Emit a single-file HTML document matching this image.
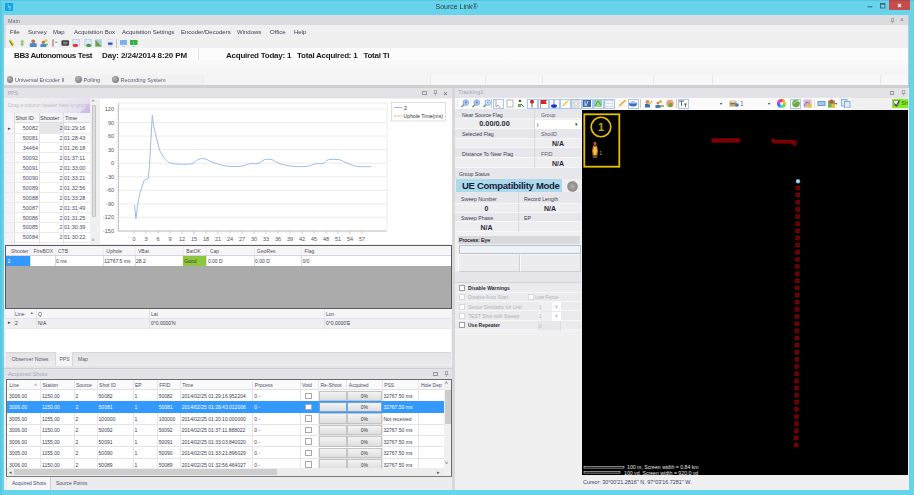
<!DOCTYPE html><html><head><meta charset="utf-8"><style>*{box-sizing:border-box}
body{margin:0;width:914px;height:495px;overflow:hidden;position:relative;background:#66d5ec;font-family:"Liberation Sans",sans-serif;color:#333}
.a{position:absolute}
.t{position:absolute;white-space:nowrap}
</style></head><body><div style="position:absolute;left:0;top:0;width:914px;height:495px;filter:blur(0.35px)"><div class="a" style="left:0px;top:0px;width:914px;height:1px;background:#5cc3dc"></div><div class="a" style="left:4.5px;top:3px;width:8px;height:8px;background:#12a2ea"></div><svg class="a" style="left:4.5px;top:3px" width="8" height="8"><path d="M3 1.5L3.8 4.5L5.5 3.5L4.8 7" stroke="#9ad8ff" stroke-width="1" fill="none"/></svg><div class="a" style="left:0px;top:0px;width:1.5px;height:495px;background:#5ec6df"></div><div class="t" style="left:435.5px;top:3.30px;font-size:7px;line-height:8.40px;color:#2a3a44">Source Link&reg;</div><svg class="a" style="left:860px;top:0" width="54" height="15"><line x1="867.5" y1="6.8" x2="872.5" y2="6.8" transform="translate(-860,0)" stroke="#3a5a66" stroke-width="1"/><rect x="20.5" y="3.5" width="4.5" height="4.5" fill="none" stroke="#3a5a66" stroke-width="0.8"/><line x1="20.5" y1="4" x2="25" y2="4" stroke="#3a5a66" stroke-width="1.2"/></svg><div class="a" style="left:889px;top:0px;width:21px;height:10px;background:#c94a4c"></div><div class="a" style="left:889px;top:0px;width:21px;height:1px;background:#a84a50"></div><svg class="a" style="left:889px;top:0" width="21" height="10"><path d="M9 4L12 7M12 4L9 7" stroke="#fff" stroke-width="1.1"/></svg><div class="a" style="left:4px;top:15px;width:905px;height:475px;background:#f0f0f0"></div><div class="a" style="left:4px;top:15px;width:1.5px;height:475px;background:#dcdcdc"></div><div class="a" style="left:908px;top:15px;width:1px;height:475px;background:#c8c8c8"></div><div class="a" style="left:4px;top:15px;width:904px;height:10px;background:#dcdce0"></div><div class="t" style="left:8px;top:17.90px;font-size:5.5px;line-height:6.60px;color:#6a6a78">Main</div><svg class="a" style="left:890px;top:18px" width="5" height="6"><path d="M1 0.5h3M1.5 0.5v3h2v-3M0.5 3.5h4M2.5 3.5v2" stroke="#999" stroke-width="0.7" fill="none"/></svg><div class="t" style="left:900px;top:16.40px;font-size:6.5px;line-height:7.80px;color:#777">&#215;</div><div class="t" style="left:10px;top:28.90px;font-size:6px;line-height:7.20px;color:#3a3a55">File</div><div class="t" style="left:28px;top:28.90px;font-size:6px;line-height:7.20px;color:#3a3a55">Survey</div><div class="t" style="left:53px;top:28.90px;font-size:6px;line-height:7.20px;color:#3a3a55">Map</div><div class="t" style="left:74px;top:28.90px;font-size:6px;line-height:7.20px;color:#3a3a55">Acquisition Box</div><div class="t" style="left:122px;top:28.90px;font-size:6px;line-height:7.20px;color:#3a3a55">Acquisition Settings</div><div class="t" style="left:181px;top:28.90px;font-size:6px;line-height:7.20px;color:#3a3a55">Encoder/Decoders</div><div class="t" style="left:237px;top:28.90px;font-size:6px;line-height:7.20px;color:#3a3a55">Windows</div><div class="t" style="left:270px;top:28.90px;font-size:6px;line-height:7.20px;color:#3a3a55">Office</div><div class="t" style="left:294px;top:28.90px;font-size:6px;line-height:7.20px;color:#3a3a55">Help</div><svg class="a" style="left:7.5px;top:39px" width="6.5" height="8" viewBox="0 0 10 10" preserveAspectRatio="none"><path d="M1 2l3-1.5 5 6-2.5 3.5z" fill="#c8c020"/><path d="M3 3l4 5" stroke="#707010" stroke-width="1.2"/></svg><svg class="a" style="left:18.5px;top:39px" width="6.5" height="8" viewBox="0 0 10 10" preserveAspectRatio="none"><path d="M5 0.5L8.5 4H6.5V6H8.5L5 9.5 1.5 6H3.5V4H1.5z" fill="#90d070"/></svg><svg class="a" style="left:28.5px;top:39px" width="8.5" height="8" viewBox="0 0 10 10" preserveAspectRatio="none"><circle cx="5" cy="2.8" r="2.3" fill="#c07040"/><path d="M1 10V6.5Q1 5 3 5H7Q9 5 9 6.5V10z" fill="#4a88d0"/></svg><svg class="a" style="left:39.5px;top:39px" width="8.5" height="8" viewBox="0 0 10 10" preserveAspectRatio="none"><circle cx="7" cy="2" r="1.8" fill="#e8c050"/><circle cx="4" cy="4" r="1.8" fill="#b87040"/><path d="M0.5 10V7.5Q0.5 6 2 6H6Q7.5 6 7.5 7.5V10z" fill="#4a88d0"/><path d="M6 8l3-2" stroke="#50b030" stroke-width="1.6"/></svg><svg class="a" style="left:51.5px;top:39px" width="7" height="8" viewBox="0 0 10 10" preserveAspectRatio="none"><rect x="2" y="0.5" width="7.5" height="9" fill="#f8f8fa" stroke="#d8dce4" stroke-width="0.5"/><rect x="0.5" y="0.5" width="1.8" height="9" fill="#c07848"/><path d="M4.5 4h3" stroke="#5a90e0" stroke-width="1.5"/></svg><svg class="a" style="left:61px;top:39px" width="8.5" height="8" viewBox="0 0 10 10" preserveAspectRatio="none"><rect x="0.5" y="1.5" width="9" height="7" rx="1.5" fill="#404040"/><rect x="2.5" y="3.5" width="5" height="3" fill="#888"/></svg><svg class="a" style="left:72px;top:39px" width="8.5" height="8" viewBox="0 0 10 10" preserveAspectRatio="none"><rect x="1" y="0.5" width="7.5" height="8" fill="#dce8f8" stroke="#a8c0e0" stroke-width="0.7"/><ellipse cx="4" cy="8" rx="3.2" ry="2" fill="#e83030"/></svg><svg class="a" style="left:83.5px;top:39px" width="8.5" height="8" viewBox="0 0 10 10" preserveAspectRatio="none"><rect x="1" y="0.5" width="7.5" height="8" fill="#dce8f8" stroke="#a8c0e0" stroke-width="0.7"/><ellipse cx="5.5" cy="8" rx="3.2" ry="2" fill="#40a040"/></svg><svg class="a" style="left:94.8px;top:39px" width="7.2" height="8" viewBox="0 0 10 10" preserveAspectRatio="none"><rect x="0.5" y="0.5" width="9" height="9" fill="#a8d0e8"/><path d="M0.5 0.5L9.5 9.5H0.5z" fill="#70a040"/></svg><svg class="a" style="left:106.5px;top:39px" width="6.5" height="8" viewBox="0 0 10 10" preserveAspectRatio="none"><rect x="1.5" y="0.5" width="7" height="9" fill="#f0f0f0" stroke="#d0d0d0" stroke-width="0.5"/><ellipse cx="5" cy="6" rx="4" ry="1.8" fill="#3a68d0"/></svg><div class="a" style="left:116.3px;top:38.5px;width:1px;height:9px;background:#c4c4c4"></div><svg class="a" style="left:119.5px;top:39.5px" width="7.5" height="7" viewBox="0 0 10 10" preserveAspectRatio="none"><rect x="0" y="0" width="10" height="7" fill="#7ab0f4"/><rect x="3" y="8.5" width="4" height="1.5" fill="#c8d0d8"/></svg><svg class="a" style="left:130.3px;top:39.5px" width="7.5" height="7" viewBox="0 0 10 10" preserveAspectRatio="none"><rect x="0" y="0" width="10" height="7" fill="#30b040"/><rect x="3" y="8.5" width="4" height="1.5" fill="#c8d0d8"/><path d="M5 2v3" stroke="#bfe8c0" stroke-width="0.8"/></svg><div class="a" style="left:4px;top:48px;width:904px;height:12px;background:#fcfcfc"></div><div class="t" style="left:14px;top:50.90px;font-size:8px;line-height:9.60px;font-weight:bold;color:#1a1a1a;letter-spacing:-0.38px">BB3 Autonomous Test</div><div class="t" style="left:102px;top:50.90px;font-size:8px;line-height:9.60px;font-weight:bold;color:#1a1a1a;letter-spacing:-0.12px">Day: 2/24/2014 8:20 PM</div><div class="a" style="left:197.5px;top:49px;width:1px;height:11px;background:#e0e0e0"></div><div class="t" style="left:226px;top:50.90px;font-size:8px;line-height:9.60px;font-weight:bold;color:#1a1a1a;letter-spacing:-0.24px">Acquired Today: 1&nbsp;&nbsp; Total Acquired: 1&nbsp;&nbsp; Total Ti</div><div class="a" style="left:4px;top:60px;width:904px;height:14.5px;background:linear-gradient(#fafafa,#f4f4f4)"></div><div class="a" style="left:4px;top:74.5px;width:904px;height:10.5px;background:#f8f8f8"></div><div class="a" style="left:4px;top:74.5px;width:199px;height:10.5px;background:#f1f1f1"></div><div class="a" style="left:203px;top:74.5px;width:227px;height:10.5px;background:#f4f4f4"></div><div class="a" style="left:203px;top:75px;width:1px;height:10px;background:#ebebeb"></div><div class="a" style="left:430px;top:75px;width:1px;height:10px;background:#ebebeb"></div><div class="a" style="left:485px;top:75px;width:1px;height:10px;background:#ebebeb"></div><div class="a" style="left:542px;top:75px;width:1px;height:10px;background:#ebebeb"></div><div class="a" style="left:653px;top:75px;width:1px;height:10px;background:#ebebeb"></div><div class="a" style="left:712px;top:75px;width:1px;height:10px;background:#ebebeb"></div><div class="a" style="left:880px;top:75px;width:1px;height:10px;background:#ebebeb"></div><div class="a" style="left:6.6px;top:75.8px;width:6.8px;height:6.8px;border-radius:50%;background:radial-gradient(circle at 40% 35%,#b8b8b8,#6a6a6a)"></div><div class="t" style="left:15px;top:76.70px;font-size:5.5px;line-height:6.60px;color:#5a5a78">Universal Encoder II</div><div class="a" style="left:75.1px;top:75.8px;width:6.8px;height:6.8px;border-radius:50%;background:radial-gradient(circle at 40% 35%,#b8b8b8,#6a6a6a)"></div><div class="t" style="left:83.5px;top:76.70px;font-size:5.5px;line-height:6.60px;color:#5a5a78">Polling</div><div class="a" style="left:112.19999999999999px;top:75.8px;width:6.8px;height:6.8px;border-radius:50%;background:radial-gradient(circle at 40% 35%,#b8b8b8,#6a6a6a)"></div><div class="t" style="left:120.6px;top:76.70px;font-size:5.5px;line-height:6.60px;color:#5a5a78">Recording System</div><div class="a" style="left:4px;top:85px;width:904px;height:3px;background:#cfcfd2"></div><div class="a" style="left:4px;top:88px;width:448px;height:10px;background:#e3e3e7"></div><div class="t" style="left:8px;top:90.00px;font-size:5px;line-height:6.00px;color:#9aa0b8">PPS</div><div class="a" style="left:422px;top:91px;width:4.5px;height:4px;border:0.7px solid #999;border-top-width:1.3px"></div><svg class="a" style="left:433px;top:90px" width="5" height="6"><path d="M1 0.5h3M1.5 0.5v3h2v-3M0.5 3.5h4M2.5 3.5v2" stroke="#999" stroke-width="0.7" fill="none"/></svg><div class="t" style="left:443.2px;top:88.50px;font-size:7.5px;line-height:9.00px;color:#666">&#215;</div><div class="a" style="left:4px;top:98px;width:448px;height:148px;background:#f0f0f0"></div><div class="a" style="left:6px;top:97.5px;width:84px;height:15px;background:linear-gradient(135deg,#f1f1f3 0%,#eeebf2 55%,#e6dcf0 89.5%,#d4c4f0 90%,#c8b4ec 100%)"></div><div class="t" style="left:8px;top:102.00px;font-size:5px;line-height:6.00px;color:#c0c0c8">Drag a column header here to group</div><div class="a" style="left:6px;top:112.5px;width:84px;height:132px;background:#fff"></div><div class="a" style="left:6px;top:112.5px;width:84px;height:10.5px;background:#f4f4f6;border-bottom:1px solid #dcdcdc"></div><div class="a" style="left:6px;top:112.5px;width:7.5px;height:132px;background:#f4f4f6"></div><div class="a" style="left:13.5px;top:112.5px;width:1px;height:132px;background:#dedede"></div><div class="a" style="left:38.5px;top:112.5px;width:1px;height:132px;background:#dedede"></div><div class="a" style="left:63px;top:112.5px;width:1px;height:132px;background:#dedede"></div><div class="t" style="left:15.5px;top:114.50px;font-size:5.5px;line-height:6.60px;color:#404050">Shot ID</div><div class="t" style="left:40px;top:114.50px;font-size:5.5px;line-height:6.60px;color:#404050">Shooter</div><div class="t" style="left:65px;top:114.50px;font-size:5.5px;line-height:6.60px;color:#404050">Time</div><div class="a" style="left:39px;top:123.1px;width:24px;height:9.94px;background:#e6e6e8"></div><div class="t" style="left:8px;top:125.07px;font-size:5px;line-height:6.00px;color:#333">&#9656;</div><div class="a" style="left:6px;top:132.54px;width:84px;height:1px;background:#ebebeb"></div><div class="t" style="left:14px;top:125.07px;font-size:5.5px;line-height:6.60px;width:24px;text-align:right;color:#4a4a68">50082</div><div class="t" style="left:39px;top:125.07px;font-size:5.5px;line-height:6.60px;width:23.5px;text-align:right;color:#4a4a68">2</div><div class="t" style="left:64px;top:125.07px;font-size:5.5px;line-height:6.60px;color:#4a4a68">01:29:16</div><div class="a" style="left:6px;top:142.48px;width:84px;height:1px;background:#ebebeb"></div><div class="t" style="left:14px;top:135.01px;font-size:5.5px;line-height:6.60px;width:24px;text-align:right;color:#4a4a68">50081</div><div class="t" style="left:39px;top:135.01px;font-size:5.5px;line-height:6.60px;width:23.5px;text-align:right;color:#4a4a68">2</div><div class="t" style="left:64px;top:135.01px;font-size:5.5px;line-height:6.60px;color:#4a4a68">01:28:43</div><div class="a" style="left:6px;top:152.42px;width:84px;height:1px;background:#ebebeb"></div><div class="t" style="left:14px;top:144.95px;font-size:5.5px;line-height:6.60px;width:24px;text-align:right;color:#4a4a68">34464</div><div class="t" style="left:39px;top:144.95px;font-size:5.5px;line-height:6.60px;width:23.5px;text-align:right;color:#4a4a68">2</div><div class="t" style="left:64px;top:144.95px;font-size:5.5px;line-height:6.60px;color:#4a4a68">01:26:18</div><div class="a" style="left:6px;top:162.35999999999999px;width:84px;height:1px;background:#ebebeb"></div><div class="t" style="left:14px;top:154.89px;font-size:5.5px;line-height:6.60px;width:24px;text-align:right;color:#4a4a68">50092</div><div class="t" style="left:39px;top:154.89px;font-size:5.5px;line-height:6.60px;width:23.5px;text-align:right;color:#4a4a68">2</div><div class="t" style="left:64px;top:154.89px;font-size:5.5px;line-height:6.60px;color:#4a4a68">01:37:11</div><div class="a" style="left:6px;top:172.29999999999998px;width:84px;height:1px;background:#ebebeb"></div><div class="t" style="left:14px;top:164.83px;font-size:5.5px;line-height:6.60px;width:24px;text-align:right;color:#4a4a68">50091</div><div class="t" style="left:39px;top:164.83px;font-size:5.5px;line-height:6.60px;width:23.5px;text-align:right;color:#4a4a68">2</div><div class="t" style="left:64px;top:164.83px;font-size:5.5px;line-height:6.60px;color:#4a4a68">01:33:00</div><div class="a" style="left:6px;top:182.23999999999998px;width:84px;height:1px;background:#ebebeb"></div><div class="t" style="left:14px;top:174.77px;font-size:5.5px;line-height:6.60px;width:24px;text-align:right;color:#4a4a68">50090</div><div class="t" style="left:39px;top:174.77px;font-size:5.5px;line-height:6.60px;width:23.5px;text-align:right;color:#4a4a68">2</div><div class="t" style="left:64px;top:174.77px;font-size:5.5px;line-height:6.60px;color:#4a4a68">01:33:21</div><div class="a" style="left:6px;top:192.18px;width:84px;height:1px;background:#ebebeb"></div><div class="t" style="left:14px;top:184.71px;font-size:5.5px;line-height:6.60px;width:24px;text-align:right;color:#4a4a68">50089</div><div class="t" style="left:39px;top:184.71px;font-size:5.5px;line-height:6.60px;width:23.5px;text-align:right;color:#4a4a68">2</div><div class="t" style="left:64px;top:184.71px;font-size:5.5px;line-height:6.60px;color:#4a4a68">01:32:56</div><div class="a" style="left:6px;top:202.12px;width:84px;height:1px;background:#ebebeb"></div><div class="t" style="left:14px;top:194.65px;font-size:5.5px;line-height:6.60px;width:24px;text-align:right;color:#4a4a68">50088</div><div class="t" style="left:39px;top:194.65px;font-size:5.5px;line-height:6.60px;width:23.5px;text-align:right;color:#4a4a68">2</div><div class="t" style="left:64px;top:194.65px;font-size:5.5px;line-height:6.60px;color:#4a4a68">01:33:28</div><div class="a" style="left:6px;top:212.06px;width:84px;height:1px;background:#ebebeb"></div><div class="t" style="left:14px;top:204.59px;font-size:5.5px;line-height:6.60px;width:24px;text-align:right;color:#4a4a68">50087</div><div class="t" style="left:39px;top:204.59px;font-size:5.5px;line-height:6.60px;width:23.5px;text-align:right;color:#4a4a68">2</div><div class="t" style="left:64px;top:204.59px;font-size:5.5px;line-height:6.60px;color:#4a4a68">01:31:49</div><div class="a" style="left:6px;top:222.0px;width:84px;height:1px;background:#ebebeb"></div><div class="t" style="left:14px;top:214.53px;font-size:5.5px;line-height:6.60px;width:24px;text-align:right;color:#4a4a68">50086</div><div class="t" style="left:39px;top:214.53px;font-size:5.5px;line-height:6.60px;width:23.5px;text-align:right;color:#4a4a68">2</div><div class="t" style="left:64px;top:214.53px;font-size:5.5px;line-height:6.60px;color:#4a4a68">01:31:25</div><div class="a" style="left:6px;top:231.94px;width:84px;height:1px;background:#ebebeb"></div><div class="t" style="left:14px;top:224.47px;font-size:5.5px;line-height:6.60px;width:24px;text-align:right;color:#4a4a68">50085</div><div class="t" style="left:39px;top:224.47px;font-size:5.5px;line-height:6.60px;width:23.5px;text-align:right;color:#4a4a68">2</div><div class="t" style="left:64px;top:224.47px;font-size:5.5px;line-height:6.60px;color:#4a4a68">01:30:39</div><div class="a" style="left:6px;top:241.88px;width:84px;height:1px;background:#ebebeb"></div><div class="t" style="left:14px;top:234.41px;font-size:5.5px;line-height:6.60px;width:24px;text-align:right;color:#4a4a68">50084</div><div class="t" style="left:39px;top:234.41px;font-size:5.5px;line-height:6.60px;width:23.5px;text-align:right;color:#4a4a68">2</div><div class="t" style="left:64px;top:234.41px;font-size:5.5px;line-height:6.60px;color:#4a4a68">01:30:22</div><div class="a" style="left:90.5px;top:98px;width:7px;height:146px;background:#f0f0f0"></div><div class="t" style="left:91.5px;top:98.00px;font-size:5px;line-height:6.00px;color:#666">&#708;</div><div class="a" style="left:92.3px;top:105px;width:4px;height:112px;background:#dedede;border:0.7px solid #c4c4c4;border-radius:1px"></div><div class="t" style="left:91.5px;top:237.00px;font-size:5px;line-height:6.00px;color:#666">&#709;</div><div class="a" style="left:99.5px;top:99px;width:352px;height:145px;background:#fff"></div><svg class="a" style="left:0;top:0" width="914" height="495"><line x1="118" y1="109.0" x2="386" y2="109.0" stroke="#ececec" stroke-width="1"/><text x="114" y="111.0" font-size="5.5" text-anchor="end" fill="#555" font-family="Liberation Sans">120</text><line x1="118" y1="122.5" x2="386" y2="122.5" stroke="#ececec" stroke-width="1"/><text x="114" y="124.5" font-size="5.5" text-anchor="end" fill="#555" font-family="Liberation Sans">90</text><line x1="118" y1="136.1" x2="386" y2="136.1" stroke="#ececec" stroke-width="1"/><text x="114" y="138.1" font-size="5.5" text-anchor="end" fill="#555" font-family="Liberation Sans">60</text><line x1="118" y1="149.7" x2="386" y2="149.7" stroke="#ececec" stroke-width="1"/><text x="114" y="151.7" font-size="5.5" text-anchor="end" fill="#555" font-family="Liberation Sans">30</text><line x1="118" y1="163.2" x2="386" y2="163.2" stroke="#ececec" stroke-width="1"/><text x="114" y="165.2" font-size="5.5" text-anchor="end" fill="#555" font-family="Liberation Sans">0</text><line x1="118" y1="176.8" x2="386" y2="176.8" stroke="#ececec" stroke-width="1"/><text x="114" y="178.8" font-size="5.5" text-anchor="end" fill="#555" font-family="Liberation Sans">-30</text><line x1="118" y1="190.3" x2="386" y2="190.3" stroke="#ececec" stroke-width="1"/><text x="114" y="192.3" font-size="5.5" text-anchor="end" fill="#555" font-family="Liberation Sans">-60</text><line x1="118" y1="203.9" x2="386" y2="203.9" stroke="#ececec" stroke-width="1"/><text x="114" y="205.9" font-size="5.5" text-anchor="end" fill="#555" font-family="Liberation Sans">-90</text><line x1="118" y1="217.4" x2="386" y2="217.4" stroke="#ececec" stroke-width="1"/><text x="114" y="219.4" font-size="5.5" text-anchor="end" fill="#555" font-family="Liberation Sans">-120</text><line x1="118" y1="230.9" x2="386" y2="230.9" stroke="#ececec" stroke-width="1"/><text x="114" y="232.9" font-size="5.5" text-anchor="end" fill="#555" font-family="Liberation Sans">-150</text><rect x="118.5" y="103" width="268.5" height="128" fill="none" stroke="#e6e6e6" stroke-width="0.8"/><line x1="118.5" y1="103" x2="118.5" y2="231" stroke="#c8c8c8" stroke-width="1"/><line x1="118" y1="231" x2="386" y2="231" stroke="#c8c8c8" stroke-width="1"/><line x1="116.5" y1="109.0" x2="118.5" y2="109.0" stroke="#bbb" stroke-width="0.5"/><line x1="116.5" y1="111.7" x2="118.5" y2="111.7" stroke="#bbb" stroke-width="0.5"/><line x1="116.5" y1="114.4" x2="118.5" y2="114.4" stroke="#bbb" stroke-width="0.5"/><line x1="116.5" y1="117.1" x2="118.5" y2="117.1" stroke="#bbb" stroke-width="0.5"/><line x1="116.5" y1="119.8" x2="118.5" y2="119.8" stroke="#bbb" stroke-width="0.5"/><line x1="116.5" y1="122.5" x2="118.5" y2="122.5" stroke="#bbb" stroke-width="0.5"/><line x1="116.5" y1="125.3" x2="118.5" y2="125.3" stroke="#bbb" stroke-width="0.5"/><line x1="116.5" y1="128.0" x2="118.5" y2="128.0" stroke="#bbb" stroke-width="0.5"/><line x1="116.5" y1="130.7" x2="118.5" y2="130.7" stroke="#bbb" stroke-width="0.5"/><line x1="116.5" y1="133.4" x2="118.5" y2="133.4" stroke="#bbb" stroke-width="0.5"/><line x1="116.5" y1="136.1" x2="118.5" y2="136.1" stroke="#bbb" stroke-width="0.5"/><line x1="116.5" y1="138.8" x2="118.5" y2="138.8" stroke="#bbb" stroke-width="0.5"/><line x1="116.5" y1="141.5" x2="118.5" y2="141.5" stroke="#bbb" stroke-width="0.5"/><line x1="116.5" y1="144.2" x2="118.5" y2="144.2" stroke="#bbb" stroke-width="0.5"/><line x1="116.5" y1="146.9" x2="118.5" y2="146.9" stroke="#bbb" stroke-width="0.5"/><line x1="116.5" y1="149.7" x2="118.5" y2="149.7" stroke="#bbb" stroke-width="0.5"/><line x1="116.5" y1="152.4" x2="118.5" y2="152.4" stroke="#bbb" stroke-width="0.5"/><line x1="116.5" y1="155.1" x2="118.5" y2="155.1" stroke="#bbb" stroke-width="0.5"/><line x1="116.5" y1="157.8" x2="118.5" y2="157.8" stroke="#bbb" stroke-width="0.5"/><line x1="116.5" y1="160.5" x2="118.5" y2="160.5" stroke="#bbb" stroke-width="0.5"/><line x1="116.5" y1="163.2" x2="118.5" y2="163.2" stroke="#bbb" stroke-width="0.5"/><line x1="116.5" y1="165.9" x2="118.5" y2="165.9" stroke="#bbb" stroke-width="0.5"/><line x1="116.5" y1="168.6" x2="118.5" y2="168.6" stroke="#bbb" stroke-width="0.5"/><line x1="116.5" y1="171.3" x2="118.5" y2="171.3" stroke="#bbb" stroke-width="0.5"/><line x1="116.5" y1="174.0" x2="118.5" y2="174.0" stroke="#bbb" stroke-width="0.5"/><line x1="116.5" y1="176.8" x2="118.5" y2="176.8" stroke="#bbb" stroke-width="0.5"/><line x1="116.5" y1="179.5" x2="118.5" y2="179.5" stroke="#bbb" stroke-width="0.5"/><line x1="116.5" y1="182.2" x2="118.5" y2="182.2" stroke="#bbb" stroke-width="0.5"/><line x1="116.5" y1="184.9" x2="118.5" y2="184.9" stroke="#bbb" stroke-width="0.5"/><line x1="116.5" y1="187.6" x2="118.5" y2="187.6" stroke="#bbb" stroke-width="0.5"/><line x1="116.5" y1="190.3" x2="118.5" y2="190.3" stroke="#bbb" stroke-width="0.5"/><line x1="116.5" y1="193.0" x2="118.5" y2="193.0" stroke="#bbb" stroke-width="0.5"/><line x1="116.5" y1="195.7" x2="118.5" y2="195.7" stroke="#bbb" stroke-width="0.5"/><line x1="116.5" y1="198.4" x2="118.5" y2="198.4" stroke="#bbb" stroke-width="0.5"/><line x1="116.5" y1="201.1" x2="118.5" y2="201.1" stroke="#bbb" stroke-width="0.5"/><line x1="116.5" y1="203.8" x2="118.5" y2="203.8" stroke="#bbb" stroke-width="0.5"/><line x1="116.5" y1="206.6" x2="118.5" y2="206.6" stroke="#bbb" stroke-width="0.5"/><line x1="116.5" y1="209.3" x2="118.5" y2="209.3" stroke="#bbb" stroke-width="0.5"/><line x1="116.5" y1="212.0" x2="118.5" y2="212.0" stroke="#bbb" stroke-width="0.5"/><line x1="116.5" y1="214.7" x2="118.5" y2="214.7" stroke="#bbb" stroke-width="0.5"/><line x1="116.5" y1="217.4" x2="118.5" y2="217.4" stroke="#bbb" stroke-width="0.5"/><line x1="116.5" y1="220.1" x2="118.5" y2="220.1" stroke="#bbb" stroke-width="0.5"/><line x1="116.5" y1="222.8" x2="118.5" y2="222.8" stroke="#bbb" stroke-width="0.5"/><line x1="116.5" y1="225.5" x2="118.5" y2="225.5" stroke="#bbb" stroke-width="0.5"/><line x1="116.5" y1="228.2" x2="118.5" y2="228.2" stroke="#bbb" stroke-width="0.5"/><line x1="116.5" y1="230.9" x2="118.5" y2="230.9" stroke="#bbb" stroke-width="0.5"/><text x="134" y="241" font-size="5.5" text-anchor="middle" fill="#555" font-family="Liberation Sans">0</text><line x1="134" y1="231" x2="134" y2="234" stroke="#bbb" stroke-width="0.6"/><text x="146" y="241" font-size="5.5" text-anchor="middle" fill="#555" font-family="Liberation Sans">3</text><line x1="146" y1="231" x2="146" y2="234" stroke="#bbb" stroke-width="0.6"/><text x="158" y="241" font-size="5.5" text-anchor="middle" fill="#555" font-family="Liberation Sans">6</text><line x1="158" y1="231" x2="158" y2="234" stroke="#bbb" stroke-width="0.6"/><text x="170" y="241" font-size="5.5" text-anchor="middle" fill="#555" font-family="Liberation Sans">9</text><line x1="170" y1="231" x2="170" y2="234" stroke="#bbb" stroke-width="0.6"/><text x="182" y="241" font-size="5.5" text-anchor="middle" fill="#555" font-family="Liberation Sans">12</text><line x1="182" y1="231" x2="182" y2="234" stroke="#bbb" stroke-width="0.6"/><text x="194" y="241" font-size="5.5" text-anchor="middle" fill="#555" font-family="Liberation Sans">15</text><line x1="194" y1="231" x2="194" y2="234" stroke="#bbb" stroke-width="0.6"/><text x="206" y="241" font-size="5.5" text-anchor="middle" fill="#555" font-family="Liberation Sans">18</text><line x1="206" y1="231" x2="206" y2="234" stroke="#bbb" stroke-width="0.6"/><text x="218" y="241" font-size="5.5" text-anchor="middle" fill="#555" font-family="Liberation Sans">21</text><line x1="218" y1="231" x2="218" y2="234" stroke="#bbb" stroke-width="0.6"/><text x="230" y="241" font-size="5.5" text-anchor="middle" fill="#555" font-family="Liberation Sans">24</text><line x1="230" y1="231" x2="230" y2="234" stroke="#bbb" stroke-width="0.6"/><text x="242" y="241" font-size="5.5" text-anchor="middle" fill="#555" font-family="Liberation Sans">27</text><line x1="242" y1="231" x2="242" y2="234" stroke="#bbb" stroke-width="0.6"/><text x="254" y="241" font-size="5.5" text-anchor="middle" fill="#555" font-family="Liberation Sans">30</text><line x1="254" y1="231" x2="254" y2="234" stroke="#bbb" stroke-width="0.6"/><text x="266" y="241" font-size="5.5" text-anchor="middle" fill="#555" font-family="Liberation Sans">33</text><line x1="266" y1="231" x2="266" y2="234" stroke="#bbb" stroke-width="0.6"/><text x="278" y="241" font-size="5.5" text-anchor="middle" fill="#555" font-family="Liberation Sans">36</text><line x1="278" y1="231" x2="278" y2="234" stroke="#bbb" stroke-width="0.6"/><text x="290" y="241" font-size="5.5" text-anchor="middle" fill="#555" font-family="Liberation Sans">39</text><line x1="290" y1="231" x2="290" y2="234" stroke="#bbb" stroke-width="0.6"/><text x="302" y="241" font-size="5.5" text-anchor="middle" fill="#555" font-family="Liberation Sans">42</text><line x1="302" y1="231" x2="302" y2="234" stroke="#bbb" stroke-width="0.6"/><text x="314" y="241" font-size="5.5" text-anchor="middle" fill="#555" font-family="Liberation Sans">45</text><line x1="314" y1="231" x2="314" y2="234" stroke="#bbb" stroke-width="0.6"/><text x="326" y="241" font-size="5.5" text-anchor="middle" fill="#555" font-family="Liberation Sans">48</text><line x1="326" y1="231" x2="326" y2="234" stroke="#bbb" stroke-width="0.6"/><text x="338" y="241" font-size="5.5" text-anchor="middle" fill="#555" font-family="Liberation Sans">51</text><line x1="338" y1="231" x2="338" y2="234" stroke="#bbb" stroke-width="0.6"/><text x="350" y="241" font-size="5.5" text-anchor="middle" fill="#555" font-family="Liberation Sans">54</text><line x1="350" y1="231" x2="350" y2="234" stroke="#bbb" stroke-width="0.6"/><text x="362" y="241" font-size="5.5" text-anchor="middle" fill="#555" font-family="Liberation Sans">57</text><line x1="362" y1="231" x2="362" y2="234" stroke="#bbb" stroke-width="0.6"/><line x1="134" y1="231" x2="134" y2="233" stroke="#ccc" stroke-width="0.4"/><line x1="138" y1="231" x2="138" y2="233" stroke="#ccc" stroke-width="0.4"/><line x1="142" y1="231" x2="142" y2="233" stroke="#ccc" stroke-width="0.4"/><line x1="146" y1="231" x2="146" y2="233" stroke="#ccc" stroke-width="0.4"/><line x1="150" y1="231" x2="150" y2="233" stroke="#ccc" stroke-width="0.4"/><line x1="154" y1="231" x2="154" y2="233" stroke="#ccc" stroke-width="0.4"/><line x1="158" y1="231" x2="158" y2="233" stroke="#ccc" stroke-width="0.4"/><line x1="162" y1="231" x2="162" y2="233" stroke="#ccc" stroke-width="0.4"/><line x1="166" y1="231" x2="166" y2="233" stroke="#ccc" stroke-width="0.4"/><line x1="170" y1="231" x2="170" y2="233" stroke="#ccc" stroke-width="0.4"/><line x1="174" y1="231" x2="174" y2="233" stroke="#ccc" stroke-width="0.4"/><line x1="178" y1="231" x2="178" y2="233" stroke="#ccc" stroke-width="0.4"/><line x1="182" y1="231" x2="182" y2="233" stroke="#ccc" stroke-width="0.4"/><line x1="186" y1="231" x2="186" y2="233" stroke="#ccc" stroke-width="0.4"/><line x1="190" y1="231" x2="190" y2="233" stroke="#ccc" stroke-width="0.4"/><line x1="194" y1="231" x2="194" y2="233" stroke="#ccc" stroke-width="0.4"/><line x1="198" y1="231" x2="198" y2="233" stroke="#ccc" stroke-width="0.4"/><line x1="202" y1="231" x2="202" y2="233" stroke="#ccc" stroke-width="0.4"/><line x1="206" y1="231" x2="206" y2="233" stroke="#ccc" stroke-width="0.4"/><line x1="210" y1="231" x2="210" y2="233" stroke="#ccc" stroke-width="0.4"/><line x1="214" y1="231" x2="214" y2="233" stroke="#ccc" stroke-width="0.4"/><line x1="218" y1="231" x2="218" y2="233" stroke="#ccc" stroke-width="0.4"/><line x1="222" y1="231" x2="222" y2="233" stroke="#ccc" stroke-width="0.4"/><line x1="226" y1="231" x2="226" y2="233" stroke="#ccc" stroke-width="0.4"/><line x1="230" y1="231" x2="230" y2="233" stroke="#ccc" stroke-width="0.4"/><line x1="234" y1="231" x2="234" y2="233" stroke="#ccc" stroke-width="0.4"/><line x1="238" y1="231" x2="238" y2="233" stroke="#ccc" stroke-width="0.4"/><line x1="242" y1="231" x2="242" y2="233" stroke="#ccc" stroke-width="0.4"/><line x1="246" y1="231" x2="246" y2="233" stroke="#ccc" stroke-width="0.4"/><line x1="250" y1="231" x2="250" y2="233" stroke="#ccc" stroke-width="0.4"/><line x1="254" y1="231" x2="254" y2="233" stroke="#ccc" stroke-width="0.4"/><line x1="258" y1="231" x2="258" y2="233" stroke="#ccc" stroke-width="0.4"/><line x1="262" y1="231" x2="262" y2="233" stroke="#ccc" stroke-width="0.4"/><line x1="266" y1="231" x2="266" y2="233" stroke="#ccc" stroke-width="0.4"/><line x1="270" y1="231" x2="270" y2="233" stroke="#ccc" stroke-width="0.4"/><line x1="274" y1="231" x2="274" y2="233" stroke="#ccc" stroke-width="0.4"/><line x1="278" y1="231" x2="278" y2="233" stroke="#ccc" stroke-width="0.4"/><line x1="282" y1="231" x2="282" y2="233" stroke="#ccc" stroke-width="0.4"/><line x1="286" y1="231" x2="286" y2="233" stroke="#ccc" stroke-width="0.4"/><line x1="290" y1="231" x2="290" y2="233" stroke="#ccc" stroke-width="0.4"/><line x1="294" y1="231" x2="294" y2="233" stroke="#ccc" stroke-width="0.4"/><line x1="298" y1="231" x2="298" y2="233" stroke="#ccc" stroke-width="0.4"/><line x1="302" y1="231" x2="302" y2="233" stroke="#ccc" stroke-width="0.4"/><line x1="306" y1="231" x2="306" y2="233" stroke="#ccc" stroke-width="0.4"/><line x1="310" y1="231" x2="310" y2="233" stroke="#ccc" stroke-width="0.4"/><line x1="314" y1="231" x2="314" y2="233" stroke="#ccc" stroke-width="0.4"/><line x1="318" y1="231" x2="318" y2="233" stroke="#ccc" stroke-width="0.4"/><line x1="322" y1="231" x2="322" y2="233" stroke="#ccc" stroke-width="0.4"/><line x1="326" y1="231" x2="326" y2="233" stroke="#ccc" stroke-width="0.4"/><line x1="330" y1="231" x2="330" y2="233" stroke="#ccc" stroke-width="0.4"/><line x1="334" y1="231" x2="334" y2="233" stroke="#ccc" stroke-width="0.4"/><line x1="338" y1="231" x2="338" y2="233" stroke="#ccc" stroke-width="0.4"/><line x1="342" y1="231" x2="342" y2="233" stroke="#ccc" stroke-width="0.4"/><line x1="346" y1="231" x2="346" y2="233" stroke="#ccc" stroke-width="0.4"/><line x1="350" y1="231" x2="350" y2="233" stroke="#ccc" stroke-width="0.4"/><line x1="354" y1="231" x2="354" y2="233" stroke="#ccc" stroke-width="0.4"/><line x1="358" y1="231" x2="358" y2="233" stroke="#ccc" stroke-width="0.4"/><line x1="362" y1="231" x2="362" y2="233" stroke="#ccc" stroke-width="0.4"/><path d="M134.5,205 L135.9,218.6 L137.8,203.6 L140,192.7 L144.1,180.4 L148.2,178.3 L149.5,165.5 L150.4,149 L152.3,115 L153.6,126 L159.6,150.4 L164.5,158.6L164.5,158.6 C165.65,159.38 167.07,162.40 171.4,163.3 C175.73,164.20 186.18,164.55 190.5,164 C194.82,163.45 195.05,160.90 197.3,160 C199.55,159.10 201.50,158.23 204,158.6 C206.50,158.97 208.63,160.97 212.3,162.2 C215.97,163.43 221.38,165.32 226,166 C230.62,166.68 236.03,166.67 240,166.3 C243.97,165.93 246.80,164.27 249.8,163.8 C252.80,163.33 255.53,164.18 258,163.5 C260.47,162.82 262.27,160.33 264.6,159.7 C266.93,159.07 269.53,159.07 272,159.7 C274.47,160.33 275.98,162.40 279.4,163.5 C282.82,164.60 287.85,165.83 292.5,166.3 C297.15,166.77 303.47,166.72 307.3,166.3 C311.13,165.88 312.90,164.27 315.5,163.8 C318.10,163.33 320.72,164.18 322.9,163.5 C325.08,162.82 325.87,160.33 328.6,159.7 C331.33,159.07 336.57,159.28 339.3,159.7 C342.03,160.12 342.13,161.10 345,162.2 C347.87,163.30 352.12,165.57 356.5,166.3 C360.88,167.03 368.83,166.55 371.3,166.6" stroke="#9cbce8" stroke-width="1" fill="none"/><rect x="391.5" y="102.5" width="54" height="18.5" fill="#fff" stroke="#d8d8d8" stroke-width="0.8"/><line x1="394" y1="107.5" x2="402" y2="107.5" stroke="#8fb0e0" stroke-width="0.9"/><text x="404" y="109.5" font-size="5.5" fill="#333" font-family="Liberation Sans">2</text><line x1="394" y1="116" x2="402" y2="116" stroke="#f0a040" stroke-width="1" stroke-dasharray="2.2 1.3"/><text x="403.5" y="118" font-size="5.2" fill="#333" font-family="Liberation Sans">Uphole Time(ms)</text></svg><div class="a" style="left:4px;top:244px;width:448px;height:122px;background:#f0f0f0"></div><div class="a" style="left:5px;top:245px;width:447px;height:64px;background:#ababab;border:1px solid #5a5a5a"></div><div class="a" style="left:6px;top:246px;width:445px;height:9.5px;background:#f6f6f8;border-bottom:1px solid #d4d4dc"></div><div class="a" style="left:6px;top:255.5px;width:445px;height:10px;background:#fff"></div><div class="t" style="left:11px;top:247.80px;font-size:5px;line-height:6.00px;color:#5a4a5a">Shooter</div><div class="a" style="left:30.3px;top:255.5px;width:0.8px;height:10px;background:#dcdce4"></div><div class="a" style="left:30.3px;top:247px;width:0.8px;height:8px;background:#ececf0"></div><div class="t" style="left:33.8px;top:247.80px;font-size:5px;line-height:6.00px;color:#5a4a5a">FireBOX</div><div class="a" style="left:54.5px;top:255.5px;width:0.8px;height:10px;background:#dcdce4"></div><div class="a" style="left:54.5px;top:247px;width:0.8px;height:8px;background:#ececf0"></div><div class="t" style="left:58.0px;top:247.80px;font-size:5px;line-height:6.00px;color:#5a4a5a">CTB</div><div class="a" style="left:102.8px;top:255.5px;width:0.8px;height:10px;background:#dcdce4"></div><div class="a" style="left:102.8px;top:247px;width:0.8px;height:8px;background:#ececf0"></div><div class="t" style="left:106.3px;top:247.80px;font-size:5px;line-height:6.00px;color:#5a4a5a">Uphole</div><div class="a" style="left:134.5px;top:255.5px;width:0.8px;height:10px;background:#dcdce4"></div><div class="a" style="left:134.5px;top:247px;width:0.8px;height:8px;background:#ececf0"></div><div class="t" style="left:138.0px;top:247.80px;font-size:5px;line-height:6.00px;color:#5a4a5a">VBat</div><div class="a" style="left:182.7px;top:255.5px;width:0.8px;height:10px;background:#dcdce4"></div><div class="a" style="left:182.7px;top:247px;width:0.8px;height:8px;background:#ececf0"></div><div class="t" style="left:186.2px;top:247.80px;font-size:5px;line-height:6.00px;color:#5a4a5a">BatOK</div><div class="a" style="left:206.4px;top:255.5px;width:0.8px;height:10px;background:#dcdce4"></div><div class="a" style="left:206.4px;top:247px;width:0.8px;height:8px;background:#ececf0"></div><div class="t" style="left:209.9px;top:247.80px;font-size:5px;line-height:6.00px;color:#5a4a5a">Cap</div><div class="a" style="left:253.6px;top:255.5px;width:0.8px;height:10px;background:#dcdce4"></div><div class="a" style="left:253.6px;top:247px;width:0.8px;height:8px;background:#ececf0"></div><div class="t" style="left:257.1px;top:247.80px;font-size:5px;line-height:6.00px;color:#5a4a5a">GeoRes</div><div class="a" style="left:301px;top:255.5px;width:0.8px;height:10px;background:#dcdce4"></div><div class="a" style="left:301px;top:247px;width:0.8px;height:8px;background:#ececf0"></div><div class="t" style="left:304.5px;top:247.80px;font-size:5px;line-height:6.00px;color:#5a4a5a">Flag</div><div class="a" style="left:6px;top:256px;width:24.3px;height:9.5px;background:#3399ff"></div><div class="a" style="left:182.7px;top:256px;width:23.7px;height:9.5px;background:#8cc83a"></div><div class="t" style="left:7.5px;top:257.80px;font-size:5px;line-height:6.00px;color:#fff">2</div><div class="t" style="left:31.8px;top:257.80px;font-size:5px;line-height:6.00px;color:#3a3a4a"></div><div class="t" style="left:56.0px;top:257.80px;font-size:5px;line-height:6.00px;color:#3a3a4a">0 ms</div><div class="t" style="left:104.3px;top:257.80px;font-size:5px;line-height:6.00px;color:#3a3a4a">12767.5 ms</div><div class="t" style="left:136.0px;top:257.80px;font-size:5px;line-height:6.00px;color:#3a3a4a">28.2</div><div class="t" style="left:184.2px;top:257.80px;font-size:5px;line-height:6.00px;color:#3a3a4a">Good</div><div class="t" style="left:207.9px;top:257.80px;font-size:5px;line-height:6.00px;color:#3a3a4a">0.00 D</div><div class="t" style="left:255.1px;top:257.80px;font-size:5px;line-height:6.00px;color:#3a3a4a">0.00 D</div><div class="t" style="left:302.5px;top:257.80px;font-size:5px;line-height:6.00px;color:#3a3a4a">0/0</div><div class="a" style="left:6px;top:309px;width:445px;height:43px;background:#fff"></div><div class="a" style="left:6px;top:309px;width:445px;height:10px;background:#f6f6f8;border-bottom:1px solid #e4e4e8"></div><div class="a" style="left:6px;top:319px;width:445px;height:9.5px;background:#f0f0f2;border-bottom:1px solid #e8e8ea"></div><div class="a" style="left:13.5px;top:309px;width:0.8px;height:19.5px;background:#e2e2e6"></div><div class="a" style="left:36px;top:309px;width:0.8px;height:19.5px;background:#e2e2e6"></div><div class="a" style="left:149px;top:309px;width:0.8px;height:19.5px;background:#e2e2e6"></div><div class="a" style="left:324px;top:309px;width:0.8px;height:19.5px;background:#e2e2e6"></div><div class="t" style="left:15px;top:310.80px;font-size:5px;line-height:6.00px;color:#5a4a6a">Line</div><div class="t" style="left:30px;top:311.40px;font-size:3.5px;line-height:4.20px;color:#555">&#9650;</div><div class="t" style="left:38px;top:310.80px;font-size:5px;line-height:6.00px;color:#5a4a6a">Q</div><div class="t" style="left:151px;top:310.80px;font-size:5px;line-height:6.00px;color:#5a4a6a">Lat</div><div class="t" style="left:326px;top:310.80px;font-size:5px;line-height:6.00px;color:#5a4a6a">Lon</div><div class="t" style="left:7.5px;top:320.30px;font-size:4.5px;line-height:5.40px;color:#333">&#9656;</div><div class="t" style="left:15px;top:320.00px;font-size:5px;line-height:6.00px;color:#3a3a4a">2</div><div class="t" style="left:38px;top:320.00px;font-size:5px;line-height:6.00px;color:#3a3a4a">N/A</div><div class="t" style="left:151px;top:320.00px;font-size:5px;line-height:6.00px;color:#3a3a4a">0&deg;0.0000'N</div><div class="t" style="left:326px;top:320.00px;font-size:5px;line-height:6.00px;color:#3a3a4a">0&deg;0.0000'E</div><div class="a" style="left:6px;top:352px;width:445px;height:14px;background:linear-gradient(#e4e4e6,#ececee);border-top:1px solid #d8d8dc"></div><div class="a" style="left:54.5px;top:352px;width:18.2px;height:14px;background:#f6f6f8;border-left:1px solid #d8d8dc;border-right:1px solid #d8d8dc"></div><div class="t" style="left:11.4px;top:355.82px;font-size:5.3px;line-height:6.36px;color:#5a5a6a">Observer Notes</div><div class="t" style="left:59.5px;top:356.00px;font-size:5px;line-height:6.00px;color:#5a5a6a">PPS</div><div class="t" style="left:78px;top:356.00px;font-size:5px;line-height:6.00px;color:#5a5a6a">Map</div><div class="a" style="left:452px;top:88px;width:3.5px;height:402px;background:#d8d8da"></div><div class="a" style="left:4px;top:366px;width:448px;height:4px;background:#e4e4e6"></div><div class="a" style="left:4px;top:367.5px;width:448px;height:1px;background:#d0d0d4"></div><div class="a" style="left:4px;top:370px;width:448px;height:120px;background:#f0f0f0"></div><div class="a" style="left:4px;top:370px;width:448px;height:8.5px;background:#e3e3e7"></div><div class="t" style="left:8px;top:370.72px;font-size:5.8px;line-height:6.96px;color:#a0a6bc">Acquired Shots</div><div class="a" style="left:433px;top:372px;width:4.5px;height:4px;border:0.7px solid #999;border-top-width:1.3px"></div><svg class="a" style="left:444px;top:371px" width="5" height="6"><path d="M1 0.5h3M1.5 0.5v3h2v-3M0.5 3.5h4M2.5 3.5v2" stroke="#999" stroke-width="0.7" fill="none"/></svg><div class="a" style="left:6px;top:378.5px;width:446px;height:99px;background:#fff;border:1px solid #6a6a6a"></div><div class="a" style="left:7px;top:379.5px;width:437px;height:10.5px;background:#fafafa;border-bottom:1px solid #e0e0e4"></div><div class="t" style="left:9.5px;top:381.80px;font-size:5px;line-height:6.00px;color:#4a4a6a">Line</div><div class="a" style="left:40px;top:379.5px;width:0.8px;height:88px;background:#e6e6ea"></div><div class="t" style="left:42.5px;top:381.80px;font-size:5px;line-height:6.00px;color:#4a4a6a">Station</div><div class="a" style="left:73.5px;top:379.5px;width:0.8px;height:88px;background:#e6e6ea"></div><div class="t" style="left:76.0px;top:381.80px;font-size:5px;line-height:6.00px;color:#4a4a6a">Source</div><div class="a" style="left:96.6px;top:379.5px;width:0.8px;height:88px;background:#e6e6ea"></div><div class="t" style="left:99.1px;top:381.80px;font-size:5px;line-height:6.00px;color:#4a4a6a">Shot ID</div><div class="a" style="left:132.5px;top:379.5px;width:0.8px;height:88px;background:#e6e6ea"></div><div class="t" style="left:135.0px;top:381.80px;font-size:5px;line-height:6.00px;color:#4a4a6a">EP</div><div class="a" style="left:156.7px;top:379.5px;width:0.8px;height:88px;background:#e6e6ea"></div><div class="t" style="left:159.2px;top:381.80px;font-size:5px;line-height:6.00px;color:#4a4a6a">FFID</div><div class="a" style="left:179.8px;top:379.5px;width:0.8px;height:88px;background:#e6e6ea"></div><div class="t" style="left:182.3px;top:381.80px;font-size:5px;line-height:6.00px;color:#4a4a6a">Time</div><div class="a" style="left:252.3px;top:379.5px;width:0.8px;height:88px;background:#e6e6ea"></div><div class="t" style="left:254.8px;top:381.80px;font-size:5px;line-height:6.00px;color:#4a4a6a">Process</div><div class="a" style="left:299.5px;top:379.5px;width:0.8px;height:88px;background:#e6e6ea"></div><div class="t" style="left:302.0px;top:381.80px;font-size:5px;line-height:6.00px;color:#4a4a6a">Void</div><div class="a" style="left:318px;top:379.5px;width:0.8px;height:88px;background:#e6e6ea"></div><div class="t" style="left:320.5px;top:381.80px;font-size:5px;line-height:6.00px;color:#4a4a6a">Re-Shoot</div><div class="a" style="left:346.3px;top:379.5px;width:0.8px;height:88px;background:#e6e6ea"></div><div class="t" style="left:348.8px;top:381.80px;font-size:5px;line-height:6.00px;color:#4a4a6a">Acquired</div><div class="a" style="left:381.7px;top:379.5px;width:0.8px;height:88px;background:#e6e6ea"></div><div class="t" style="left:384.2px;top:381.80px;font-size:5px;line-height:6.00px;color:#4a4a6a">PSS</div><div class="a" style="left:418.4px;top:379.5px;width:0.8px;height:88px;background:#e6e6ea"></div><div class="t" style="left:420.9px;top:381.80px;font-size:5px;line-height:6.00px;color:#4a4a6a">Hole Dep</div><div class="t" style="left:34px;top:381.50px;font-size:5px;line-height:6.00px;color:#777">&#708;</div><div class="a" style="left:7px;top:400.65px;width:437px;height:0.8px;background:#e4e4e8"></div><div class="t" style="left:9px;top:393.03px;font-size:5px;line-height:6.00px;color:#3a3a50">3006.00</div><div class="t" style="left:42px;top:393.03px;font-size:5px;line-height:6.00px;color:#3a3a50">1150.00</div><div class="t" style="left:75.5px;top:393.03px;font-size:5px;line-height:6.00px;color:#3a3a50">2</div><div class="t" style="left:98.6px;top:393.03px;font-size:5px;line-height:6.00px;color:#3a3a50">50082</div><div class="t" style="left:134.5px;top:393.03px;font-size:5px;line-height:6.00px;color:#3a3a50">1</div><div class="t" style="left:158.7px;top:393.03px;font-size:5px;line-height:6.00px;color:#3a3a50">50082</div><div class="t" style="left:181.8px;top:393.03px;font-size:5px;line-height:6.00px;color:#3a3a50">2014/02/25 01:29:16.952204</div><div class="t" style="left:254.3px;top:393.03px;font-size:5px;line-height:6.00px;color:#3a3a50">0 -</div><div class="a" style="left:305px;top:392.5px;width:6.5px;height:6.5px;background:#fff;border:1px solid #a8a8a8"></div><div class="a" style="left:318.5px;top:390.5px;width:28px;height:10.45px;background:linear-gradient(#f4f4f4,#dedede);border:1px solid #c4c4c4"></div><div class="a" style="left:347px;top:390.5px;width:34.5px;height:10.45px;background:linear-gradient(#f4f4f4,#dedede);border:1px solid #c4c4c4"></div><div class="t" style="left:347.5px;top:393.03px;font-size:5px;line-height:6.00px;width:33.5px;text-align:center;color:#333">0%</div><div class="t" style="left:383.5px;top:393.03px;font-size:5px;line-height:6.00px;color:#3a3a50">32767.50 ms</div><div class="a" style="left:7px;top:401.45px;width:437px;height:11.45px;background:#3399ff"></div><div class="t" style="left:9px;top:404.48px;font-size:5px;line-height:6.00px;color:#fff">3006.00</div><div class="t" style="left:42px;top:404.48px;font-size:5px;line-height:6.00px;color:#fff">1150.00</div><div class="t" style="left:75.5px;top:404.48px;font-size:5px;line-height:6.00px;color:#fff">2</div><div class="t" style="left:98.6px;top:404.48px;font-size:5px;line-height:6.00px;color:#fff">50081</div><div class="t" style="left:134.5px;top:404.48px;font-size:5px;line-height:6.00px;color:#fff">1</div><div class="t" style="left:158.7px;top:404.48px;font-size:5px;line-height:6.00px;color:#fff">50081</div><div class="t" style="left:181.8px;top:404.48px;font-size:5px;line-height:6.00px;color:#fff">2014/02/25 01:28:43.012006</div><div class="t" style="left:254.3px;top:404.48px;font-size:5px;line-height:6.00px;color:#fff">0 -</div><div class="a" style="left:305px;top:403.95px;width:6.5px;height:6.5px;background:#fff;border:1px solid #a8a8a8"></div><div class="a" style="left:318.5px;top:401.95px;width:28px;height:10.45px;background:linear-gradient(#f4f4f4,#dedede);border:1px solid #6aa8e8"></div><div class="a" style="left:347px;top:401.95px;width:34.5px;height:10.45px;background:linear-gradient(#f4f4f4,#dedede);border:1px solid #6aa8e8"></div><div class="t" style="left:347.5px;top:404.48px;font-size:5px;line-height:6.00px;width:33.5px;text-align:center;color:#333">0%</div><div class="t" style="left:383.5px;top:404.48px;font-size:5px;line-height:6.00px;color:#fff">32767.50 ms</div><div class="a" style="left:7px;top:423.54999999999995px;width:437px;height:0.8px;background:#e4e4e8"></div><div class="t" style="left:9px;top:415.93px;font-size:5px;line-height:6.00px;color:#3a3a50">3005.00</div><div class="t" style="left:42px;top:415.93px;font-size:5px;line-height:6.00px;color:#3a3a50">1155.00</div><div class="t" style="left:75.5px;top:415.93px;font-size:5px;line-height:6.00px;color:#3a3a50">2</div><div class="t" style="left:98.6px;top:415.93px;font-size:5px;line-height:6.00px;color:#3a3a50">100000</div><div class="t" style="left:134.5px;top:415.93px;font-size:5px;line-height:6.00px;color:#3a3a50">1</div><div class="t" style="left:158.7px;top:415.93px;font-size:5px;line-height:6.00px;color:#3a3a50">100000</div><div class="t" style="left:181.8px;top:415.93px;font-size:5px;line-height:6.00px;color:#3a3a50">2014/02/25 01:20:10.000000</div><div class="t" style="left:254.3px;top:415.93px;font-size:5px;line-height:6.00px;color:#3a3a50">0 -</div><div class="a" style="left:305px;top:415.4px;width:6.5px;height:6.5px;background:#fff;border:1px solid #a8a8a8"></div><div class="a" style="left:318.5px;top:413.4px;width:28px;height:10.45px;background:linear-gradient(#f4f4f4,#dedede);border:1px solid #c4c4c4"></div><div class="a" style="left:347px;top:413.4px;width:34.5px;height:10.45px;background:linear-gradient(#f4f4f4,#dedede);border:1px solid #c4c4c4"></div><div class="t" style="left:347.5px;top:415.93px;font-size:5px;line-height:6.00px;width:33.5px;text-align:center;color:#333">0%</div><div class="t" style="left:383.5px;top:415.93px;font-size:5px;line-height:6.00px;color:#3a3a50">Not received</div><div class="a" style="left:7px;top:435.0px;width:437px;height:0.8px;background:#e4e4e8"></div><div class="t" style="left:9px;top:427.38px;font-size:5px;line-height:6.00px;color:#3a3a50">3006.00</div><div class="t" style="left:42px;top:427.38px;font-size:5px;line-height:6.00px;color:#3a3a50">1150.00</div><div class="t" style="left:75.5px;top:427.38px;font-size:5px;line-height:6.00px;color:#3a3a50">2</div><div class="t" style="left:98.6px;top:427.38px;font-size:5px;line-height:6.00px;color:#3a3a50">50092</div><div class="t" style="left:134.5px;top:427.38px;font-size:5px;line-height:6.00px;color:#3a3a50">1</div><div class="t" style="left:158.7px;top:427.38px;font-size:5px;line-height:6.00px;color:#3a3a50">50092</div><div class="t" style="left:181.8px;top:427.38px;font-size:5px;line-height:6.00px;color:#3a3a50">2014/02/25 01:37:11.888022</div><div class="t" style="left:254.3px;top:427.38px;font-size:5px;line-height:6.00px;color:#3a3a50">0 -</div><div class="a" style="left:305px;top:426.85px;width:6.5px;height:6.5px;background:#fff;border:1px solid #a8a8a8"></div><div class="a" style="left:318.5px;top:424.85px;width:28px;height:10.45px;background:linear-gradient(#f4f4f4,#dedede);border:1px solid #c4c4c4"></div><div class="a" style="left:347px;top:424.85px;width:34.5px;height:10.45px;background:linear-gradient(#f4f4f4,#dedede);border:1px solid #c4c4c4"></div><div class="t" style="left:347.5px;top:427.38px;font-size:5px;line-height:6.00px;width:33.5px;text-align:center;color:#333">0%</div><div class="t" style="left:383.5px;top:427.38px;font-size:5px;line-height:6.00px;color:#3a3a50">32767.50 ms</div><div class="a" style="left:7px;top:446.45px;width:437px;height:0.8px;background:#e4e4e8"></div><div class="t" style="left:9px;top:438.83px;font-size:5px;line-height:6.00px;color:#3a3a50">3006.00</div><div class="t" style="left:42px;top:438.83px;font-size:5px;line-height:6.00px;color:#3a3a50">1155.00</div><div class="t" style="left:75.5px;top:438.83px;font-size:5px;line-height:6.00px;color:#3a3a50">2</div><div class="t" style="left:98.6px;top:438.83px;font-size:5px;line-height:6.00px;color:#3a3a50">50091</div><div class="t" style="left:134.5px;top:438.83px;font-size:5px;line-height:6.00px;color:#3a3a50">1</div><div class="t" style="left:158.7px;top:438.83px;font-size:5px;line-height:6.00px;color:#3a3a50">50091</div><div class="t" style="left:181.8px;top:438.83px;font-size:5px;line-height:6.00px;color:#3a3a50">2014/02/25 01:33:03.840020</div><div class="t" style="left:254.3px;top:438.83px;font-size:5px;line-height:6.00px;color:#3a3a50">0 -</div><div class="a" style="left:305px;top:438.3px;width:6.5px;height:6.5px;background:#fff;border:1px solid #a8a8a8"></div><div class="a" style="left:318.5px;top:436.3px;width:28px;height:10.45px;background:linear-gradient(#f4f4f4,#dedede);border:1px solid #c4c4c4"></div><div class="a" style="left:347px;top:436.3px;width:34.5px;height:10.45px;background:linear-gradient(#f4f4f4,#dedede);border:1px solid #c4c4c4"></div><div class="t" style="left:347.5px;top:438.83px;font-size:5px;line-height:6.00px;width:33.5px;text-align:center;color:#333">0%</div><div class="t" style="left:383.5px;top:438.83px;font-size:5px;line-height:6.00px;color:#3a3a50">32767.50 ms</div><div class="a" style="left:7px;top:457.9px;width:437px;height:0.8px;background:#e4e4e8"></div><div class="t" style="left:9px;top:450.28px;font-size:5px;line-height:6.00px;color:#3a3a50">3005.00</div><div class="t" style="left:42px;top:450.28px;font-size:5px;line-height:6.00px;color:#3a3a50">1155.00</div><div class="t" style="left:75.5px;top:450.28px;font-size:5px;line-height:6.00px;color:#3a3a50">2</div><div class="t" style="left:98.6px;top:450.28px;font-size:5px;line-height:6.00px;color:#3a3a50">50090</div><div class="t" style="left:134.5px;top:450.28px;font-size:5px;line-height:6.00px;color:#3a3a50">1</div><div class="t" style="left:158.7px;top:450.28px;font-size:5px;line-height:6.00px;color:#3a3a50">50090</div><div class="t" style="left:181.8px;top:450.28px;font-size:5px;line-height:6.00px;color:#3a3a50">2014/02/25 01:33:21.896029</div><div class="t" style="left:254.3px;top:450.28px;font-size:5px;line-height:6.00px;color:#3a3a50">0 -</div><div class="a" style="left:305px;top:449.75px;width:6.5px;height:6.5px;background:#fff;border:1px solid #a8a8a8"></div><div class="a" style="left:318.5px;top:447.75px;width:28px;height:10.45px;background:linear-gradient(#f4f4f4,#dedede);border:1px solid #c4c4c4"></div><div class="a" style="left:347px;top:447.75px;width:34.5px;height:10.45px;background:linear-gradient(#f4f4f4,#dedede);border:1px solid #c4c4c4"></div><div class="t" style="left:347.5px;top:450.28px;font-size:5px;line-height:6.00px;width:33.5px;text-align:center;color:#333">0%</div><div class="t" style="left:383.5px;top:450.28px;font-size:5px;line-height:6.00px;color:#3a3a50">32767.50 ms</div><div class="a" style="left:7px;top:469.34999999999997px;width:437px;height:0.8px;background:#e4e4e8"></div><div class="t" style="left:9px;top:461.73px;font-size:5px;line-height:6.00px;color:#3a3a50">3006.00</div><div class="t" style="left:42px;top:461.73px;font-size:5px;line-height:6.00px;color:#3a3a50">1150.00</div><div class="t" style="left:75.5px;top:461.73px;font-size:5px;line-height:6.00px;color:#3a3a50">2</div><div class="t" style="left:98.6px;top:461.73px;font-size:5px;line-height:6.00px;color:#3a3a50">50089</div><div class="t" style="left:134.5px;top:461.73px;font-size:5px;line-height:6.00px;color:#3a3a50">1</div><div class="t" style="left:158.7px;top:461.73px;font-size:5px;line-height:6.00px;color:#3a3a50">50089</div><div class="t" style="left:181.8px;top:461.73px;font-size:5px;line-height:6.00px;color:#3a3a50">2014/02/25 01:32:56.464027</div><div class="t" style="left:254.3px;top:461.73px;font-size:5px;line-height:6.00px;color:#3a3a50">0 -</div><div class="a" style="left:305px;top:461.2px;width:6.5px;height:6.5px;background:#fff;border:1px solid #a8a8a8"></div><div class="a" style="left:318.5px;top:459.2px;width:28px;height:10.45px;background:linear-gradient(#f4f4f4,#dedede);border:1px solid #c4c4c4"></div><div class="a" style="left:347px;top:459.2px;width:34.5px;height:10.45px;background:linear-gradient(#f4f4f4,#dedede);border:1px solid #c4c4c4"></div><div class="t" style="left:347.5px;top:461.73px;font-size:5px;line-height:6.00px;width:33.5px;text-align:center;color:#333">0%</div><div class="t" style="left:383.5px;top:461.73px;font-size:5px;line-height:6.00px;color:#3a3a50">32767.50 ms</div><div class="a" style="left:7px;top:467.5px;width:437px;height:9.5px;background:#ececec"></div><div class="a" style="left:14px;top:469px;width:263px;height:6px;background:#cdcdcd"></div><div class="t" style="left:8.5px;top:469.50px;font-size:4.5px;line-height:5.40px;color:#555">&#9666;</div><div class="t" style="left:437px;top:469.50px;font-size:4.5px;line-height:5.40px;color:#555">&#9656;</div><div class="a" style="left:444px;top:379.5px;width:7px;height:98px;background:#f0f0f0"></div><div class="t" style="left:444.5px;top:380.40px;font-size:6px;line-height:7.20px;color:#555">&#708;</div><div class="a" style="left:445px;top:390px;width:5.5px;height:34px;background:#cdcdcd"></div><div class="t" style="left:444.8px;top:460.40px;font-size:6px;line-height:7.20px;color:#555">&#709;</div><div class="a" style="left:444px;top:467.5px;width:7px;height:9.5px;background:#f0f0f0"></div><div class="a" style="left:6px;top:477px;width:446px;height:13px;background:#ececee"></div><div class="a" style="left:6px;top:476.3px;width:446px;height:1.2px;background:#7a7a7a"></div><div class="a" style="left:7px;top:477px;width:43.5px;height:13px;background:#f7f7f9;border-right:1px solid #d0d0d4"></div><div class="t" style="left:12px;top:480.20px;font-size:5px;line-height:6.00px;color:#4a4a6a">Acquired Shots</div><div class="t" style="left:56px;top:480.20px;font-size:5px;line-height:6.00px;color:#4a4a6a">Source Points</div><div class="a" style="left:455px;top:88px;width:454px;height:402px;background:#f0f0f0"></div><div class="a" style="left:455px;top:88px;width:453px;height:9.5px;background:#e3e3e7"></div><div class="t" style="left:458px;top:89.46px;font-size:5.9px;line-height:7.08px;color:#a0a6bc">Tracking1</div><div class="a" style="left:889.5px;top:91px;width:4.5px;height:4px;border:0.7px solid #999;border-top-width:1.3px"></div><svg class="a" style="left:901px;top:90px" width="5" height="6"><path d="M1 0.5h3M1.5 0.5v3h2v-3M0.5 3.5h4M2.5 3.5v2" stroke="#999" stroke-width="0.7" fill="none"/></svg><div class="a" style="left:455px;top:97.5px;width:396px;height:12px;background:#fbfbfb"></div><div class="a" style="left:456.5px;top:100px;width:1px;height:7px;background:repeating-linear-gradient(#d0d0d0 0 1px,transparent 1px 2px)"></div><svg class="a" style="left:460px;top:99px" width="10" height="9" viewBox="0 0 10 9"><circle cx="5.8" cy="3.6" r="2.8" fill="#b8d0f4" stroke="#6a90d8" stroke-width="0.7"/><circle cx="5.8" cy="3.6" r="1" fill="#4a70d0"/><path d="M3.8 5.6L1.5 8" stroke="#777" stroke-width="1.2"/></svg><svg class="a" style="left:471px;top:99px" width="10" height="9" viewBox="0 0 10 9"><circle cx="5.8" cy="3.6" r="2.8" fill="#b8d0f4" stroke="#6a90d8" stroke-width="0.7"/><circle cx="5.8" cy="3.6" r="1" fill="#4a70d0"/><path d="M3.8 5.6L1.5 8" stroke="#777" stroke-width="1.2"/></svg><svg class="a" style="left:482px;top:99px" width="10" height="9" viewBox="0 0 10 9"><circle cx="5.8" cy="3.6" r="2.8" fill="#dde6f8" stroke="#6a90d8" stroke-width="0.7"/><circle cx="5.8" cy="3.6" r="1" fill="#90a8e0"/><path d="M3.8 5.6L1.5 8" stroke="#777" stroke-width="1.2"/></svg><div class="a" style="left:491px;top:99px;width:1px;height:9px;background:#ccc"></div><div class="a" style="left:492.5px;top:98.5px;width:11px;height:10px;border:1px solid #a8c8f0"></div><svg class="a" style="left:493px;top:99px" width="10" height="9" viewBox="0 0 10 9"><path d="M3 1v7l2-2 2 3" stroke="#888" stroke-width="0.7" fill="#fff"/></svg><svg class="a" style="left:505px;top:99px" width="10" height="9" viewBox="0 0 10 9"><rect x="2" y="1" width="6" height="7" fill="#fff" stroke="#999" stroke-width="0.7"/></svg><svg class="a" style="left:516px;top:99px" width="10" height="9" viewBox="0 0 10 9"><circle cx="4" cy="2" r="1.3" fill="#555"/><rect x="2" y="5" width="3" height="3" fill="#6a6"/><path d="M5 5l3 3" stroke="#555" stroke-width="1"/></svg><div class="a" style="left:526.5px;top:98.5px;width:11px;height:10px;border:1px solid #a8c8f0"></div><svg class="a" style="left:527px;top:99px" width="10" height="9" viewBox="0 0 10 9"><circle cx="5" cy="2.8" r="2" fill="#d02020"/><path d="M5 4.5v4" stroke="#555" stroke-width="0.9"/></svg><div class="a" style="left:537.5px;top:98.5px;width:11px;height:10px;border:1px solid #a8c8f0"></div><svg class="a" style="left:538px;top:99px" width="10" height="9" viewBox="0 0 10 9"><path d="M2.5 1v8" stroke="#888" stroke-width="0.8"/><path d="M3 1h6l-1.5 2L9 5H3z" fill="#e02020"/></svg><div class="a" style="left:548.5px;top:98.5px;width:11px;height:10px;border:1px solid #a8c8f0"></div><svg class="a" style="left:549px;top:99px" width="10" height="9" viewBox="0 0 10 9"><path d="M5 0.5v5" stroke="#6a8ab0" stroke-width="1"/><ellipse cx="5" cy="7" rx="3" ry="1.8" fill="#2030c0"/></svg><div class="a" style="left:559.5px;top:98.5px;width:11px;height:10px;border:1px solid #a8c8f0"></div><svg class="a" style="left:560px;top:99px" width="10" height="9" viewBox="0 0 10 9"><path d="M2 8l1-3 5-4 1 1-5 5z" fill="#e8d860"/></svg><div class="a" style="left:570.5px;top:98.5px;width:11px;height:10px;border:1px solid #a8c8f0"></div><svg class="a" style="left:571px;top:99px" width="10" height="9" viewBox="0 0 10 9"><rect x="2" y="1" width="6" height="7" fill="#f4f4f4" stroke="#aaa" stroke-width="0.6"/><circle cx="5" cy="4.5" r="1.8" fill="none" stroke="#bbb" stroke-width="0.6"/></svg><div class="a" style="left:581.5px;top:98.5px;width:11px;height:10px;border:1px solid #a8c8f0"></div><svg class="a" style="left:582px;top:99px" width="10" height="9" viewBox="0 0 10 9"><rect x="1" y="1" width="8" height="7" fill="#3a68b0"/><path d="M3 2v5M6 2l-2 5" stroke="#fff" stroke-width="0.8"/></svg><div class="a" style="left:592.5px;top:98.5px;width:11px;height:10px;border:1px solid #a8c8f0"></div><svg class="a" style="left:593px;top:99px" width="10" height="9" viewBox="0 0 10 9"><rect x="1" y="1" width="8" height="7" fill="#9ad0a0"/><path d="M2 7l3-5 3 4" stroke="#4a9a4a" stroke-width="0.9" fill="none"/></svg><div class="a" style="left:603.5px;top:98.5px;width:11px;height:10px;border:1px solid #a8c8f0"></div><svg class="a" style="left:604px;top:99px" width="10" height="9" viewBox="0 0 10 9"><rect x="1" y="1.5" width="8" height="6" fill="#f4f6fa" stroke="#c0cce0" stroke-width="0.6"/><path d="M2 4.5h6" stroke="#c0cce0" stroke-width="0.6"/></svg><svg class="a" style="left:617px;top:99px" width="10" height="9" viewBox="0 0 10 9"><path d="M1.5 8l1-2.5 5.5-5 1.2 1.2-5.5 5z" fill="#f0b030"/></svg><div class="a" style="left:627.5px;top:98.5px;width:11px;height:10px;border:1px solid #a8c8f0"></div><svg class="a" style="left:628px;top:99px" width="10" height="9" viewBox="0 0 10 9"><ellipse cx="5" cy="5" rx="4" ry="2.5" fill="#3a70c0"/><rect x="2" y="3" width="6" height="1.5" fill="#bcd"/></svg><div class="a" style="left:639.5px;top:99px;width:1px;height:9px;background:#ccc"></div><svg class="a" style="left:643px;top:99px" width="10" height="9" viewBox="0 0 10 9"><circle cx="4.5" cy="3" r="2" fill="#d09050"/><rect x="2" y="5" width="5" height="3.5" fill="#3a70c0"/><path d="M6 6l3-4" stroke="#e8b040" stroke-width="1.2"/></svg><svg class="a" style="left:654px;top:99px" width="10" height="9" viewBox="0 0 10 9"><circle cx="6.5" cy="2.5" r="1.5" fill="#e0b040"/><circle cx="4" cy="4" r="1.5" fill="#d08040"/><rect x="1.5" y="6" width="5" height="3" fill="#4a7ac0"/><path d="M6 7h4" stroke="#5ab030" stroke-width="1.4"/></svg><svg class="a" style="left:665px;top:99px" width="10" height="9" viewBox="0 0 10 9"><circle cx="5" cy="4.5" r="3.8" fill="#f0a080"/><circle cx="5.5" cy="6" r="2.2" fill="#60b040"/></svg><div class="a" style="left:676px;top:99px;width:1px;height:9px;background:#ccc"></div><div class="a" style="left:677.5px;top:98.5px;width:11px;height:10px;border:1px solid #a8c8f0"></div><svg class="a" style="left:678px;top:99px" width="10" height="9" viewBox="0 0 10 9"><path d="M1 2h5M3.5 2v5M6 5h3M7.5 5v3" stroke="#444" stroke-width="0.8"/></svg><div class="t" style="left:719.5px;top:100.5px;font-size:4px;line-height:6px;color:#333">&#9662;</div><svg class="a" style="left:729px;top:99px" width="10" height="9" viewBox="0 0 10 9"><rect x="0.5" y="2" width="7" height="5.5" fill="#c8a070"/><rect x="1.5" y="1" width="5" height="2.5" fill="#e8dcc0"/><rect x="1.5" y="4" width="5" height="1" fill="#8a6a40"/><circle cx="8" cy="6" r="1.8" fill="#3a78c8"/></svg><div class="t" style="left:740px;top:99.5px;font-size:6.5px;line-height:8px;color:#7858a8">1</div><div class="t" style="left:768px;top:100.5px;font-size:4px;line-height:6px;color:#333">&#9662;</div><div class="a" style="left:777px;top:99px;width:8.5px;height:8.5px;border-radius:50%;background:conic-gradient(#ff4040,#ffd040,#60e040,#40e0e0,#4060ff,#e040e0,#ff4040)"></div><div class="a" style="left:779.5px;top:101.5px;width:3.5px;height:3.5px;border-radius:50%;background:#f8f8ff"></div><div class="a" style="left:790.0px;top:98.5px;width:11px;height:10px;border:1px solid #a8c8f0"></div><svg class="a" style="left:790.5px;top:99px" width="10" height="9" viewBox="0 0 10 9"><circle cx="5" cy="4.5" r="3.8" fill="#70a848"/><path d="M2.5 5Q5 1 8 2" stroke="#c8e8a0" stroke-width="1" fill="none"/></svg><svg class="a" style="left:802.5px;top:99px" width="10" height="9" viewBox="0 0 10 9"><rect x="0.5" y="0.5" width="8" height="8" fill="#e8b0d0"/><path d="M1 7l3-4 3 2" stroke="#4080c0" stroke-width="1" fill="none"/><rect x="4.5" y="4.5" width="4" height="4" fill="#e8c040"/></svg><div class="a" style="left:813.5px;top:99px;width:1px;height:9px;background:#ddd"></div><svg class="a" style="left:816.5px;top:99px" width="10" height="9" viewBox="0 0 10 9"><rect x="0.5" y="2" width="8" height="5" fill="#6a98d0"/><rect x="1.5" y="3" width="6" height="3" fill="#a8c8f0"/></svg><svg class="a" style="left:826.5px;top:99px" width="10" height="9" viewBox="0 0 10 9"><rect x="1" y="1.5" width="7" height="7" fill="#70b050"/><circle cx="4.5" cy="2.5" r="2" fill="#e04040"/><rect x="4.5" y="5" width="3.5" height="3.5" fill="#e8c040"/></svg><div class="t" style="left:835px;top:101px;font-size:4px;line-height:6px;color:#333">&#9662;</div><svg class="a" style="left:841px;top:99px" width="10" height="9" viewBox="0 0 10 9"><rect x="0.5" y="0.5" width="5.5" height="6.5" fill="#e0ecfa" stroke="#5a90d8" stroke-width="0.7"/><rect x="3.5" y="2.5" width="5.5" height="6.5" fill="#e0ecfa" stroke="#5a90d8" stroke-width="0.7"/></svg><div class="a" style="left:891.5px;top:98.7px;width:16.5px;height:9.5px;background:#7cf020"></div><div class="a" style="left:893.3px;top:100.2px;width:5.6px;height:6px;background:#e8f0e0;border:0.6px solid #8a9a80"></div><svg class="a" style="left:892px;top:99px" width="9" height="9"><path d="M2.5 4.5L4.2 7L7.5 1.5" stroke="#333" stroke-width="1.1" fill="none"/></svg><div class="t" style="left:901.3px;top:100.20px;font-size:5.5px;line-height:6.60px;color:#3a5a20">Sh</div><div class="a" style="left:455px;top:109px;width:126px;height:10px;background:#e7e7eb;border-bottom:1px solid #f6f6f8"></div><div class="a" style="left:455px;top:119px;width:126px;height:10px;background:#eeeef1;border-bottom:1px solid #f6f6f8"></div><div class="a" style="left:455px;top:129px;width:126px;height:9.5px;background:#e7e7eb;border-bottom:1px solid #f6f6f8"></div><div class="a" style="left:455px;top:138.5px;width:126px;height:9.5px;background:#eeeef1;border-bottom:1px solid #f6f6f8"></div><div class="a" style="left:455px;top:148px;width:126px;height:10px;background:#e7e7eb;border-bottom:1px solid #f6f6f8"></div><div class="a" style="left:455px;top:158px;width:126px;height:10px;background:#eeeef1;border-bottom:1px solid #f6f6f8"></div><div class="a" style="left:534px;top:109px;width:0.8px;height:59px;background:#d8d8dc"></div><div class="t" style="left:462px;top:111.88px;font-size:5.2px;line-height:6.24px;color:#3a3a4e">Near Source Flag</div><div class="t" style="left:541px;top:111.88px;font-size:5.2px;line-height:6.24px;color:#5a5a6e">Group</div><div class="t" style="left:455px;top:119.92px;font-size:7.3px;line-height:8.76px;width:79px;text-align:center;font-weight:bold;color:#2a2a3a">0.00/0.00</div><div class="a" style="left:535px;top:120px;width:45.5px;height:9px;background:#fff"></div><div class="t" style="left:537px;top:121.50px;font-size:5px;line-height:6.00px;color:#333">I</div><div class="t" style="left:575px;top:121.60px;font-size:4.5px;line-height:5.40px;color:#333">&#9662;</div><div class="t" style="left:462px;top:131.38px;font-size:5.2px;line-height:6.24px;color:#3a3a4e">Selected Flag</div><div class="t" style="left:541px;top:131.38px;font-size:5.2px;line-height:6.24px;color:#5a5a6e">ShotID</div><div class="t" style="left:535px;top:139.80px;font-size:7px;line-height:8.40px;width:46px;text-align:center;font-weight:bold;color:#2a2a3a">N/A</div><div class="t" style="left:462px;top:150.88px;font-size:5.2px;line-height:6.24px;color:#3a3a4e">Distance To Near Flag</div><div class="t" style="left:541px;top:150.88px;font-size:5.2px;line-height:6.24px;color:#5a5a6e">FFID</div><div class="t" style="left:535px;top:159.60px;font-size:7px;line-height:8.40px;width:46px;text-align:center;font-weight:bold;color:#2a2a3a">N/A</div><div class="a" style="left:455px;top:168px;width:126px;height:11px;background:#e7e7eb"></div><div class="t" style="left:459px;top:170.58px;font-size:5.2px;line-height:6.24px;color:#3a3a4e">Group Status</div><div class="a" style="left:455px;top:179px;width:126px;height:13.3px;background:#eeeef1"></div><div class="a" style="left:455.6px;top:179.3px;width:106.8px;height:13.5px;background:#acdaea"></div><div class="t" style="left:457.6px;top:180.10px;font-size:9.5px;line-height:11.40px;width:106.4px;text-align:center;font-weight:bold;color:#14203e;letter-spacing:-0.28px">UE Compatibility Mode</div><div class="a" style="left:566.5px;top:180.5px;width:11px;height:11px;border-radius:50%;background:radial-gradient(circle at 50% 50%,#b0b0b0,#909090 60%,#707070);border:1px solid #999"></div><div class="a" style="left:455px;top:192.3px;width:126px;height:11.699999999999989px;background:#e7e7eb;border-bottom:1px solid #f6f6f8"></div><div class="a" style="left:455px;top:204px;width:126px;height:9px;background:#eeeef1;border-bottom:1px solid #f6f6f8"></div><div class="a" style="left:455px;top:213px;width:126px;height:9px;background:#e7e7eb;border-bottom:1px solid #f6f6f8"></div><div class="a" style="left:455px;top:222px;width:126px;height:10px;background:#eeeef1;border-bottom:1px solid #f6f6f8"></div><div class="a" style="left:518px;top:192.3px;width:0.8px;height:40px;background:#d8d8dc"></div><div class="t" style="left:461px;top:195.88px;font-size:5.2px;line-height:6.24px;color:#3a3a4e">Sweep Number</div><div class="t" style="left:524px;top:195.88px;font-size:5.2px;line-height:6.24px;color:#3a3a4e">Record Length</div><div class="t" style="left:455px;top:204.60px;font-size:7px;line-height:8.40px;width:63px;text-align:center;font-weight:bold;color:#2a2a3a">0</div><div class="t" style="left:519px;top:205.30px;font-size:7px;line-height:8.40px;width:62px;text-align:center;font-weight:bold;color:#2a2a3a">N/A</div><div class="t" style="left:461px;top:214.88px;font-size:5.2px;line-height:6.24px;color:#3a3a4e">Sweep Phase</div><div class="t" style="left:524px;top:214.88px;font-size:5.2px;line-height:6.24px;color:#3a3a4e">EP</div><div class="t" style="left:455px;top:224.30px;font-size:7px;line-height:8.40px;width:63px;text-align:center;font-weight:bold;color:#2a2a3a">N/A</div><div class="a" style="left:455px;top:232px;width:126px;height:3.8px;background:#f0f0f0"></div><div class="a" style="left:458px;top:235.8px;width:122px;height:8px;background:#d9d9dc"></div><div class="t" style="left:459px;top:236.82px;font-size:5.3px;line-height:6.36px;color:#2a2a3a;text-shadow:0 0 0.3px #555">Process: Eye</div><div class="a" style="left:459px;top:245px;width:121.5px;height:9px;background:#eef2f8;border:1px solid #b8c0cc"></div><div class="a" style="left:458px;top:254px;width:61.5px;height:18px;background:#ececef;border:1px solid;border-color:#fafafa #d0d0d4 #d0d0d4 #fafafa"></div><div class="a" style="left:520px;top:254px;width:60.5px;height:18px;background:#ececef;border:1px solid;border-color:#fafafa #d0d0d4 #d0d0d4 #fafafa"></div><div class="a" style="left:458px;top:271.5px;width:122px;height:1px;background:#d8d8dc"></div><div class="a" style="left:455px;top:272px;width:126px;height:10.5px;background:#e6e6ea;border-bottom:1px solid #d4d4d8"></div><div class="a" style="left:455px;top:283px;width:126px;height:9.5px;background:#ebebee;border-bottom:1px solid #f6f6f8"></div><div class="a" style="left:459px;top:284.75px;width:6px;height:6px;background:#fff;border:1px solid #a0a0a0"></div><div class="t" style="left:468px;top:284.75px;font-size:5px;line-height:6.00px;font-weight:bold;color:#2a2a3a">Disable Warnings</div><div class="a" style="left:455px;top:292.5px;width:126px;height:9.5px;background:#ebebee;border-bottom:1px solid #f6f6f8"></div><div class="a" style="left:459px;top:294.25px;width:6px;height:6px;background:#fff;border:1px solid #d8d8d8"></div><div class="t" style="left:468px;top:294.25px;font-size:5px;line-height:6.00px;color:#b0b0b8">Disable Auto Start</div><div class="a" style="left:455px;top:302px;width:126px;height:9.300000000000011px;background:#ebebee;border-bottom:1px solid #f6f6f8"></div><div class="a" style="left:459px;top:303.65px;width:6px;height:6px;background:#fff;border:1px solid #d8d8d8"></div><div class="t" style="left:468px;top:303.65px;font-size:5px;line-height:6.00px;color:#b0b0b8">Sector Similarity for Unit</div><div class="a" style="left:455px;top:311.3px;width:126px;height:9.300000000000011px;background:#ebebee;border-bottom:1px solid #f6f6f8"></div><div class="a" style="left:459px;top:312.95000000000005px;width:6px;height:6px;background:#fff;border:1px solid #d8d8d8"></div><div class="t" style="left:468px;top:312.95px;font-size:5px;line-height:6.00px;color:#b0b0b8">TEST Shot with Sweep</div><div class="a" style="left:455px;top:320.6px;width:126px;height:9.399999999999977px;background:#ebebee;border-bottom:1px solid #f6f6f8"></div><div class="a" style="left:459px;top:322.3px;width:6px;height:6px;background:#fff;border:1px solid #a0a0a0"></div><div class="t" style="left:468px;top:322.30px;font-size:5px;line-height:6.00px;font-weight:bold;color:#2a2a3a">Use Repeater</div><div class="a" style="left:527.5px;top:294.3px;width:6px;height:6px;background:#fff;border:1px solid #d8d8d8"></div><div class="t" style="left:535px;top:294.30px;font-size:5px;line-height:6.00px;color:#b0b0b8">Low Force</div><div class="a" style="left:537.7px;top:302.3px;width:23.6px;height:9px;background:#fff"></div><div class="a" style="left:537.7px;top:302.3px;width:14.3px;height:9px;background:#efeff1"></div><div class="t" style="left:539px;top:303.80px;font-size:5px;line-height:6.00px;color:#bbb">1</div><div class="t" style="left:555px;top:304.00px;font-size:5px;line-height:6.00px;color:#777">&#709;</div><div class="a" style="left:537.7px;top:311.6px;width:23.6px;height:9px;background:#fff"></div><div class="a" style="left:537.7px;top:311.6px;width:14.3px;height:9px;background:#efeff1"></div><div class="t" style="left:539px;top:313.10px;font-size:5px;line-height:6.00px;color:#bbb">1</div><div class="t" style="left:555px;top:313.30px;font-size:5px;line-height:6.00px;color:#777">&#709;</div><div class="a" style="left:537.7px;top:321px;width:23.6px;height:9px;background:#e8e8ea;border-left:1px solid #ddd;border-right:1px solid #ddd"></div><div class="t" style="left:539px;top:322.50px;font-size:5px;line-height:6.00px;color:#bbb">0</div><div class="a" style="left:581.6px;top:110px;width:326.4px;height:365px;background:#000"></div><svg class="a" style="left:0;top:0" width="914" height="495"><rect x="584.3" y="114.3" width="35" height="52.4" fill="none" stroke="#e6c000" stroke-width="1.8"/><circle cx="601" cy="127" r="9.8" fill="none" stroke="#e6c000" stroke-width="1.6"/><text x="601" y="131" font-size="11" font-weight="bold" text-anchor="middle" fill="#b8a820" font-family="Liberation Sans">1</text><ellipse cx="595" cy="143.5" rx="1.4" ry="1.8" fill="#c05a40"/><path d="M593 145.5 L597 145.5 L598 151 L597 158 L593 158 L592 151 Z" fill="#b86a20"/><path d="M593.8 147 L596.5 147 L597 151 L596 155 L594 155 L593.2 151Z" fill="#f0c050"/><path d="M593 155 L597 155 L597 158 L593 158Z" fill="#6a4a30"/><text x="599.5" y="154.5" font-size="4.5" fill="#c8b020" font-family="Liberation Sans">1</text><rect x="711.5" y="138.3" width="28.8" height="4.3" fill="#860000"/><rect x="713.3" y="140" width="1" height="1" fill="#300000"/><rect x="716.9" y="140" width="1" height="1" fill="#300000"/><rect x="720.5" y="140" width="1" height="1" fill="#300000"/><rect x="724.1" y="140" width="1" height="1" fill="#300000"/><rect x="727.7" y="140" width="1" height="1" fill="#300000"/><rect x="731.3" y="140" width="1" height="1" fill="#300000"/><rect x="734.9" y="140" width="1" height="1" fill="#300000"/><rect x="738.5" y="140" width="1" height="1" fill="#300000"/><rect x="771.6" y="138.6" width="3" height="4" fill="#860000"/><rect x="773.5" y="140" width="20" height="3.6" fill="#860000"/><rect x="792.5" y="140.5" width="4" height="5" fill="#860000"/><rect x="775.0" y="141.3" width="1" height="1" fill="#300000"/><rect x="778.3" y="141.3" width="1" height="1" fill="#300000"/><rect x="781.6" y="141.3" width="1" height="1" fill="#300000"/><rect x="784.9" y="141.3" width="1" height="1" fill="#300000"/><rect x="788.2" y="141.3" width="1" height="1" fill="#300000"/><rect x="791.5" y="141.3" width="1" height="1" fill="#300000"/><rect x="794" y="142.3" width="1.2" height="1.4" fill="#300000"/><circle cx="798" cy="181.3" r="2.2" fill="#70b8e0"/><circle cx="798" cy="181.3" r="1.2" fill="#b0e0f8"/><rect x="795.6" y="185.8" width="4.4" height="4.4" fill="#820000"/><rect x="797.0" y="187.2" width="1.6" height="1.6" fill="#300000"/><rect x="795.6" y="192.9" width="4.4" height="4.4" fill="#820000"/><rect x="797.0" y="194.3" width="1.6" height="1.6" fill="#300000"/><rect x="795.5" y="200.1" width="4.4" height="4.4" fill="#820000"/><rect x="796.9" y="201.5" width="1.6" height="1.6" fill="#300000"/><rect x="795.5" y="207.2" width="4.4" height="4.4" fill="#820000"/><rect x="796.9" y="208.6" width="1.6" height="1.6" fill="#300000"/><rect x="795.4" y="214.4" width="4.4" height="4.4" fill="#820000"/><rect x="796.8" y="215.8" width="1.6" height="1.6" fill="#300000"/><rect x="795.4" y="221.5" width="4.4" height="4.4" fill="#820000"/><rect x="796.8" y="222.9" width="1.6" height="1.6" fill="#300000"/><rect x="795.3" y="228.6" width="4.4" height="4.4" fill="#820000"/><rect x="796.8" y="230.0" width="1.6" height="1.6" fill="#300000"/><rect x="795.3" y="235.8" width="4.4" height="4.4" fill="#820000"/><rect x="796.7" y="237.2" width="1.6" height="1.6" fill="#300000"/><rect x="795.3" y="242.9" width="4.4" height="4.4" fill="#820000"/><rect x="796.7" y="244.3" width="1.6" height="1.6" fill="#300000"/><rect x="795.2" y="250.1" width="4.4" height="4.4" fill="#820000"/><rect x="796.6" y="251.5" width="1.6" height="1.6" fill="#300000"/><rect x="795.2" y="257.2" width="4.4" height="4.4" fill="#820000"/><rect x="796.6" y="258.6" width="1.6" height="1.6" fill="#300000"/><rect x="795.1" y="264.3" width="4.4" height="4.4" fill="#820000"/><rect x="796.5" y="265.7" width="1.6" height="1.6" fill="#300000"/><rect x="795.1" y="271.5" width="4.4" height="4.4" fill="#820000"/><rect x="796.5" y="272.9" width="1.6" height="1.6" fill="#300000"/><rect x="795.1" y="278.6" width="4.4" height="4.4" fill="#820000"/><rect x="796.5" y="280.0" width="1.6" height="1.6" fill="#300000"/><rect x="795.0" y="285.8" width="4.4" height="4.4" fill="#820000"/><rect x="796.4" y="287.2" width="1.6" height="1.6" fill="#300000"/><rect x="795.0" y="292.9" width="4.4" height="4.4" fill="#820000"/><rect x="796.4" y="294.3" width="1.6" height="1.6" fill="#300000"/><rect x="794.9" y="300.0" width="4.4" height="4.4" fill="#820000"/><rect x="796.3" y="301.4" width="1.6" height="1.6" fill="#300000"/><rect x="794.9" y="307.2" width="4.4" height="4.4" fill="#820000"/><rect x="796.3" y="308.6" width="1.6" height="1.6" fill="#300000"/><rect x="794.8" y="314.3" width="4.4" height="4.4" fill="#820000"/><rect x="796.2" y="315.7" width="1.6" height="1.6" fill="#300000"/><rect x="794.8" y="321.5" width="4.4" height="4.4" fill="#820000"/><rect x="796.2" y="322.9" width="1.6" height="1.6" fill="#300000"/><rect x="794.8" y="328.6" width="4.4" height="4.4" fill="#820000"/><rect x="796.2" y="330.0" width="1.6" height="1.6" fill="#300000"/><rect x="794.7" y="335.7" width="4.4" height="4.4" fill="#820000"/><rect x="796.1" y="337.1" width="1.6" height="1.6" fill="#300000"/><rect x="794.7" y="342.9" width="4.4" height="4.4" fill="#820000"/><rect x="796.1" y="344.3" width="1.6" height="1.6" fill="#300000"/><rect x="794.6" y="350.0" width="4.4" height="4.4" fill="#820000"/><rect x="796.0" y="351.4" width="1.6" height="1.6" fill="#300000"/><rect x="794.6" y="357.2" width="4.4" height="4.4" fill="#820000"/><rect x="796.0" y="358.6" width="1.6" height="1.6" fill="#300000"/><rect x="794.6" y="364.3" width="4.4" height="4.4" fill="#820000"/><rect x="796.0" y="365.7" width="1.6" height="1.6" fill="#300000"/><rect x="794.5" y="371.4" width="4.4" height="4.4" fill="#820000"/><rect x="795.9" y="372.8" width="1.6" height="1.6" fill="#300000"/><rect x="794.5" y="378.6" width="4.4" height="4.4" fill="#820000"/><rect x="795.9" y="380.0" width="1.6" height="1.6" fill="#300000"/><rect x="794.4" y="385.7" width="4.4" height="4.4" fill="#820000"/><rect x="795.8" y="387.1" width="1.6" height="1.6" fill="#300000"/><rect x="794.4" y="392.9" width="4.4" height="4.4" fill="#820000"/><rect x="795.8" y="394.3" width="1.6" height="1.6" fill="#300000"/><rect x="794.3" y="400.0" width="4.4" height="4.4" fill="#820000"/><rect x="795.8" y="401.4" width="1.6" height="1.6" fill="#300000"/><rect x="794.3" y="407.1" width="4.4" height="4.4" fill="#820000"/><rect x="795.7" y="408.5" width="1.6" height="1.6" fill="#300000"/><rect x="794.3" y="414.3" width="4.4" height="4.4" fill="#820000"/><rect x="795.7" y="415.7" width="1.6" height="1.6" fill="#300000"/><rect x="794.2" y="421.4" width="4.4" height="4.4" fill="#820000"/><rect x="795.6" y="422.8" width="1.6" height="1.6" fill="#300000"/><rect x="794.2" y="428.6" width="4.4" height="4.4" fill="#820000"/><rect x="795.6" y="430.0" width="1.6" height="1.6" fill="#300000"/><rect x="794.1" y="435.7" width="4.4" height="4.4" fill="#820000"/><rect x="795.5" y="437.1" width="1.6" height="1.6" fill="#300000"/><rect x="794.1" y="442.8" width="4.4" height="4.4" fill="#820000"/><rect x="795.5" y="444.2" width="1.6" height="1.6" fill="#300000"/><rect x="584" y="466.3" width="40" height="1.8" fill="none" stroke="#ddd" stroke-width="0.6"/><rect x="584" y="471.3" width="36" height="1.8" fill="none" stroke="#ddd" stroke-width="0.6"/><text x="627" y="469.3" font-size="5.2" fill="#e0e0e0" font-family="Liberation Sans">100 m, Screen width = 0.84 km</text><text x="624" y="474.5" font-size="5.2" fill="#e0e0e0" font-family="Liberation Sans">100 yd, Screen width = 920.0 yd</text></svg><div class="a" style="left:581px;top:475px;width:328px;height:15px;background:#f0f0f0"></div><div class="t" style="left:583px;top:478.76px;font-size:5.4px;line-height:6.48px;color:#3a3a6a">Cursor: 30&deg;00'21.2816" N, 97&deg;03'16.7281" W.</div></div></body></html>
